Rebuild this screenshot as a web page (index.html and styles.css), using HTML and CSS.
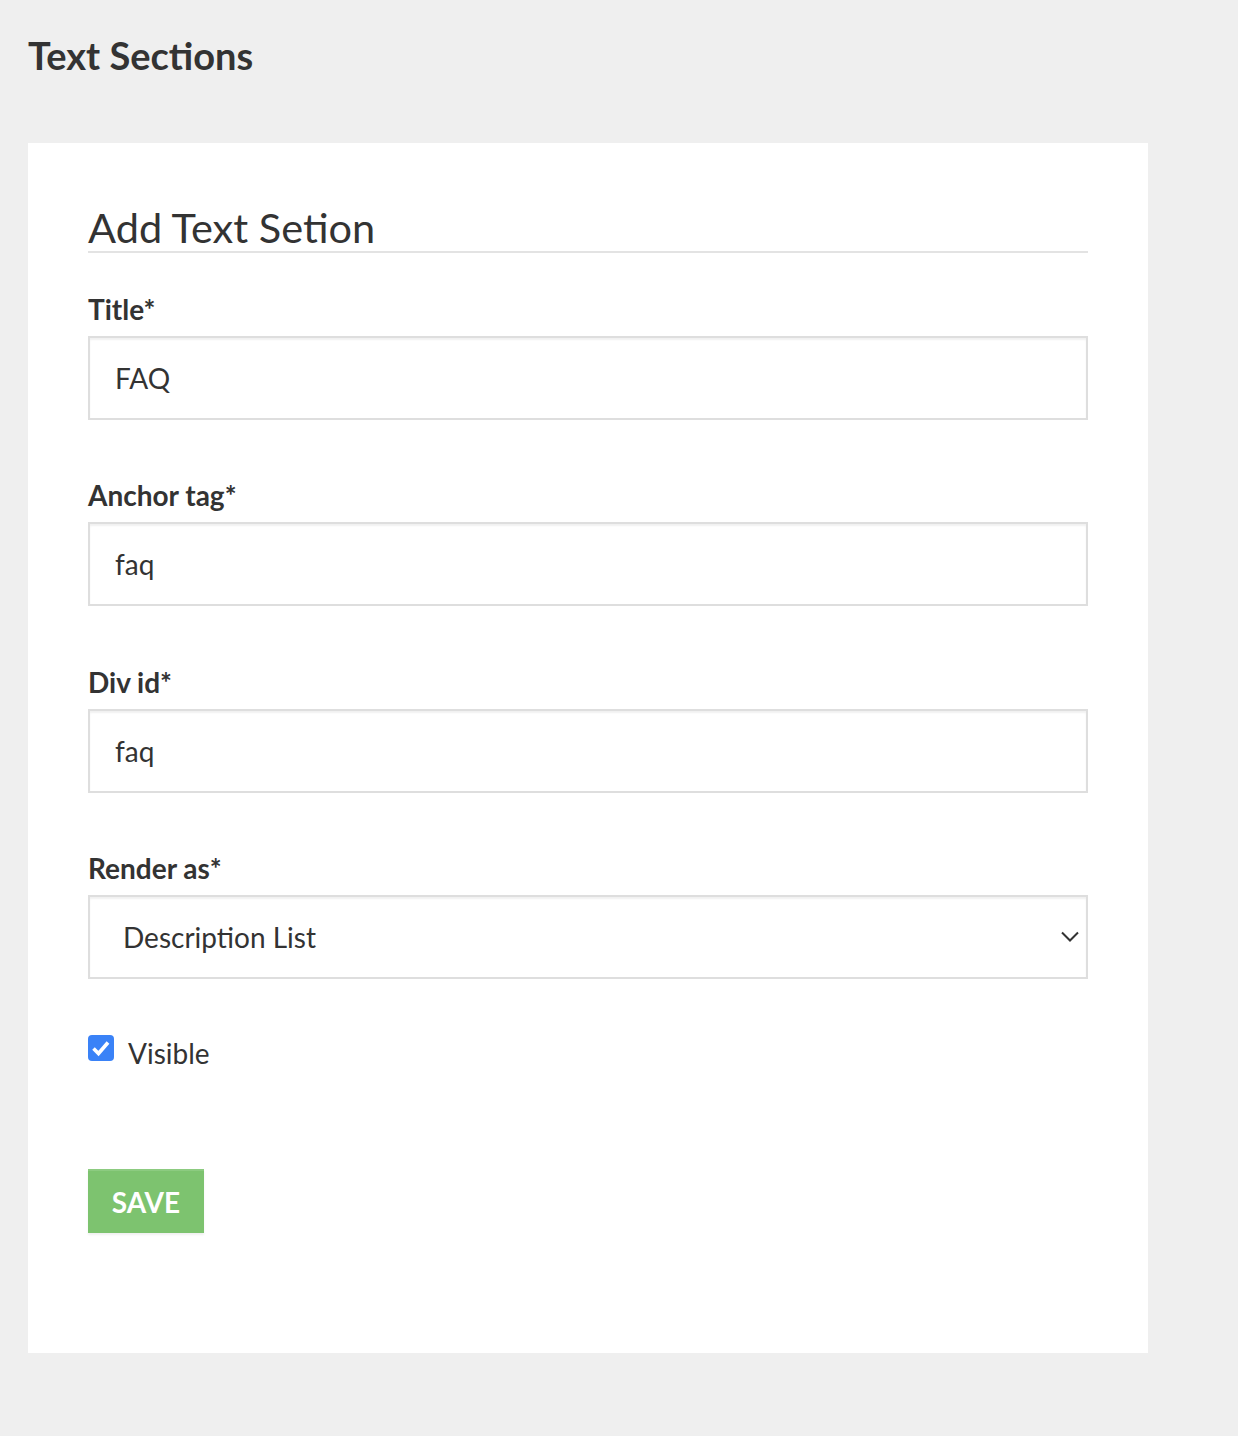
FILE: index.html
```html
<!DOCTYPE html>
<html>
<head>
<meta charset="utf-8">
<link rel="stylesheet" href="styles.css">
</head>
<body>
<div class="page">
  <h1 class="page-title">Text Sections</h1>
  <div class="card">
    <h2 class="form-title">Add Text Setion</h2>
    <form class="form">
      <div class="field">
        <label class="label">Title*</label>
        <input class="input" type="text" value="FAQ">
      </div>
      <div class="field">
        <label class="label">Anchor tag*</label>
        <input class="input" type="text" value="faq">
      </div>
      <div class="field">
        <label class="label">Div id*</label>
        <input class="input" type="text" value="faq">
      </div>
      <div class="field field-last">
        <label class="label">Render as*</label>
        <div class="select">
          <span class="select-value">Description List</span>
          <svg class="chevron" width="18" height="12" viewBox="0 0 18 12"><path d="M1 1.5 L9 9.5 L17 1.5" fill="none" stroke="#333" stroke-width="2"/></svg>
        </div>
      </div>
      <div class="check-row">
        <span class="checkbox"><svg width="26" height="26" viewBox="0 0 26 26"><path d="M5.5 13.5 L10.5 18.5 L20 7.5" fill="none" stroke="#fff" stroke-width="3.6"/></svg></span>
        <span class="check-label">Visible</span>
      </div>
      <div class="actions">
        <button class="btn-save" type="button">SAVE</button>
      </div>
    </form>
  </div>
</div>
</body>
</html>
```
FILE: styles.css
```css
html, body {
  margin: 0;
  padding: 0;
  background: #efefef;
}
body {
  font-family: Lato, "Open Sans", sans-serif;
  color: #333;
}
.page {
  padding: 0 90px 83px 28px;
}
.page-title {
  margin: 0;
  padding-top: 32px;
  font-size: 38px;
  font-weight: 700;
  line-height: 46px;
  color: #333;
}
.card {
  margin-top: 65px;
  background: #fff;
  padding: 60px 60px 120px 60px;
}
.form-title {
  margin: 0;
  font-size: 41.5px;
  font-weight: 400;
  line-height: 48px;
  color: #333;
  border-bottom: 2px solid #e3e3e3;
}
.form {
  display: flex;
  flex-direction: column;
  margin-top: 39px;
}
.field {
  display: flex;
  flex-direction: column;
  margin-bottom: 58.4px;
}
.field-last {
  margin-bottom: 56px;
}
.label {
  font-size: 28px;
  font-weight: 700;
  line-height: 34px;
  margin-bottom: 10px;
}
.input, .select {
  box-sizing: border-box;
  height: 84px;
  width: 100%;
  border: 2px solid #dedede;
  box-shadow: inset 0 2px 2px rgba(0,0,0,0.06);
  background: #fff;
  font-family: Lato, sans-serif;
  font-size: 28px;
  color: #333;
  padding: 0 25px;
  outline: none;
}
.select {
  display: flex;
  align-items: center;
  justify-content: space-between;
  padding: 0 7px 0 33px;
}
.check-row {
  display: flex;
  align-items: flex-start;
  gap: 14px;
}
.checkbox {
  width: 26px;
  height: 26px;
  border-radius: 4px;
  background: #3a82f7;
  display: inline-flex;
}
.check-label {
  font-size: 28px;
  line-height: 1.2;
  padding-top: 2px;
}
.actions {
  margin-top: 98px;
  display: flex;
}
.btn-save {
  width: 116px;
  height: 64px;
  border: none;
  border-top: 2px solid #8ccb80;
  background: #7dc36f;
  color: #fff;
  font-family: Lato, sans-serif;
  font-weight: 700;
  font-size: 28px;
  padding: 0;
  box-shadow: 0 2px 2px rgba(0,0,0,0.06);
}
```
